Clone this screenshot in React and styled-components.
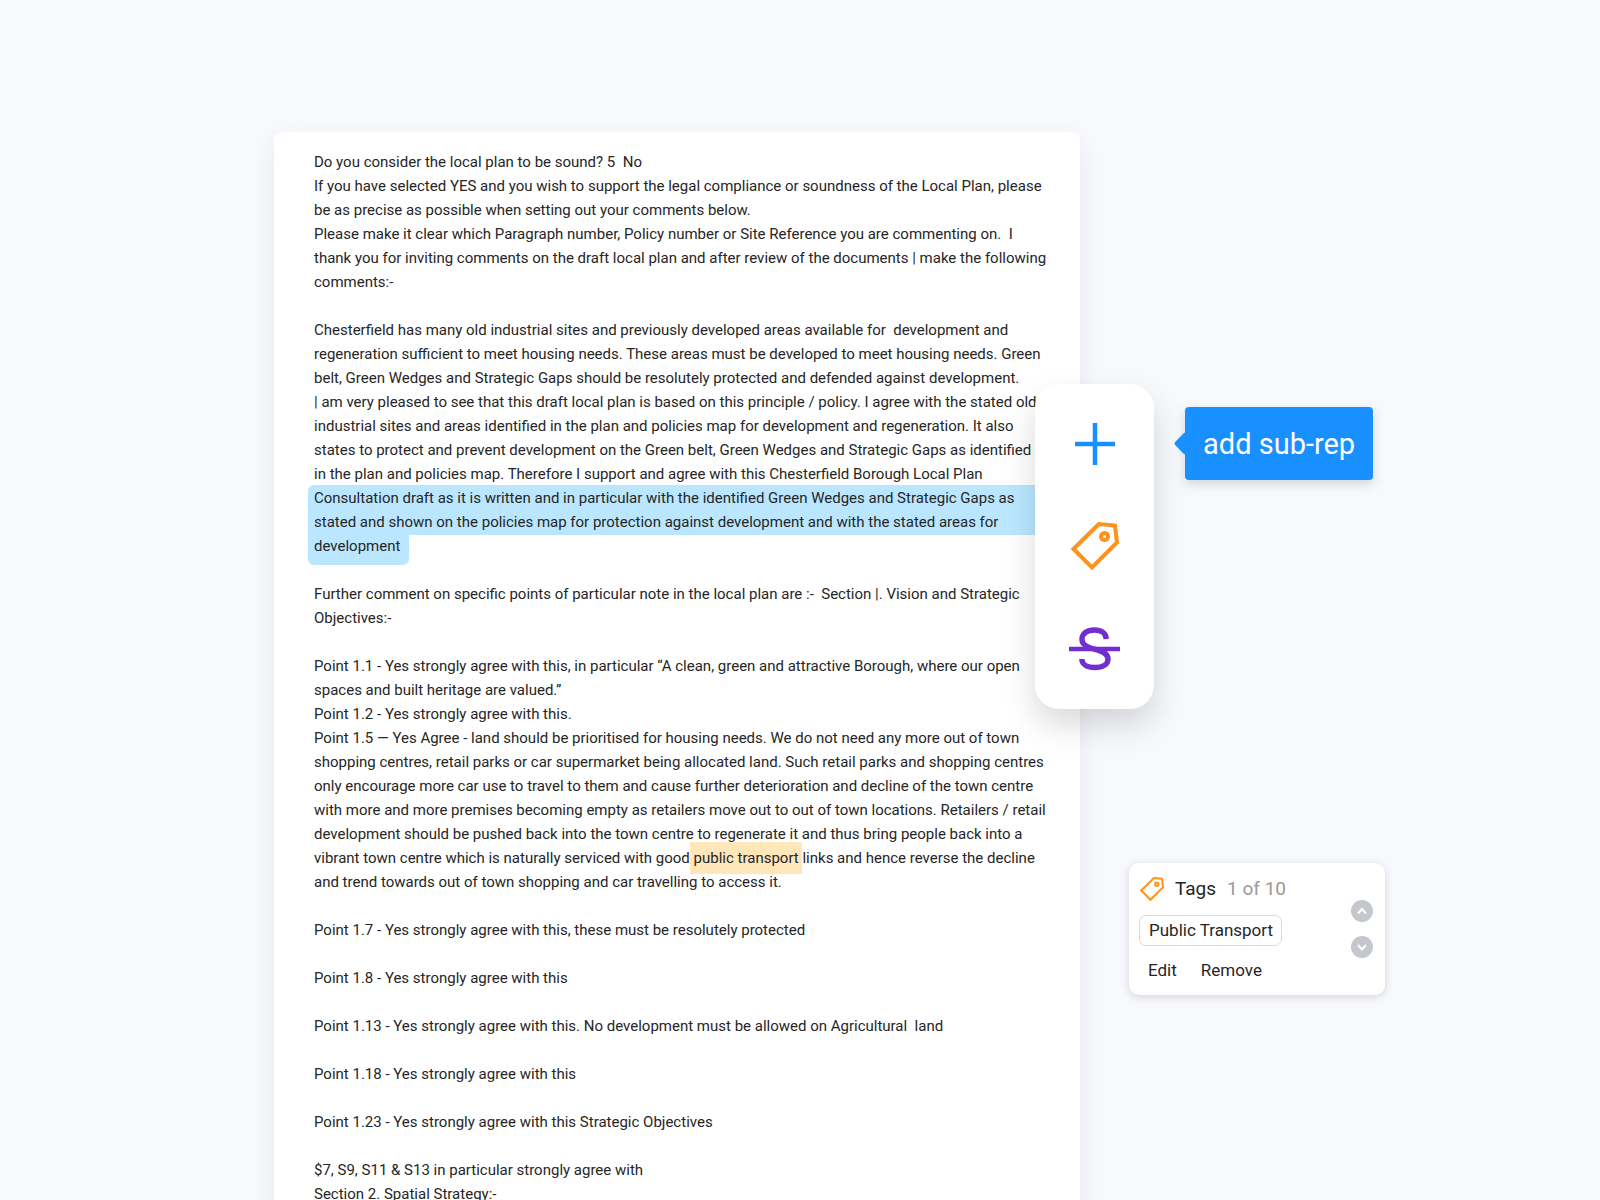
import React from "react";
import styled, { createGlobalStyle } from "styled-components";

const GlobalStyle = createGlobalStyle`
  * {
    box-sizing: border-box;
  }

  body {
    margin: 0;
    background-color: #f8f9fd;
    color: #262626;
    font-family: Roboto, Inter, "Liberation Sans", sans-serif;
  }

  button {
    font: inherit;
    color: inherit;
    padding: 0;
    border: none;
    background: none;
    cursor: pointer;
  }
`;

const Container = styled.div`
  display: grid;
  grid-template-columns: 274fr minmax(0, 806fr) 520fr;
  height: 100vh;
  padding-top: 132px;
  overflow: hidden;
`;

const Sheet = styled.main`
  grid-column: 2;
  padding: 18px 40px;
  background-color: white;
  border-radius: 8px 8px 0 0;
  box-shadow: 0 8px 24px rgba(0, 0, 0, 0.07);
  font-size: 15px;
  line-height: 24px;
  white-space: pre;
`;

const Paragraph = styled.p`
  margin: 0 0 24px;
`;

const Selection = styled.mark`
  display: block;
  color: inherit;
  background: none;
`;

const SelectionBody = styled.span`
  display: block;
  margin: -1px -6px;
  padding: 1px 6px;
  background-color: #bae7ff;
  border-radius: 6px 0 0 0;
`;

const SelectionEnd = styled.span`
  display: block;
  width: fit-content;
  margin: 0 -6px -7px;
  padding: 0 9px 7px 6px;
  background-color: #bae7ff;
  border-radius: 0 0 6px 6px;
`;

const TagMark = styled.mark`
  padding: 7px 0;
  color: inherit;
  background-color: #ffe7ba;
`;

const Side = styled.aside`
  grid-column: 3;
  display: flex;
  flex-direction: column;
  align-items: flex-start;
  gap: 154px;
  padding-top: 252px;
`;

const Actions = styled.div`
  display: flex;
  align-items: flex-start;
  gap: 31px;
  margin-left: -45px;
  z-index: 1;
`;

const Toolbar = styled.div`
  display: flex;
  flex-direction: column;
  width: 119px;
  padding: 9px 0 10px;
  background-color: white;
  border-radius: 24px;
  box-shadow: 0 16px 32px rgba(0, 0, 0, 0.15);
`;

const ToolButton = styled.button`
  display: flex;
  align-items: center;
  justify-content: center;
  height: 102px;
  color: ${(props) => props.$color};
`;

const Tooltip = styled.div`
  position: relative;
  margin-top: 23px;
  padding: 19px 18px 18px;
  border-radius: 4px;
  background-color: #1890ff;
  box-shadow: 0 4px 12px rgba(0, 0, 0, 0.15);
  color: white;
  font-size: 29px;
  line-height: 36px;
  white-space: nowrap;

  &::before {
    content: "";
    position: absolute;
    left: -8px;
    top: 28px;
    width: 17px;
    height: 17px;
    border-radius: 3px;
    background-color: #1890ff;
    transform: rotate(45deg);
  }
`;

const Card = styled.section`
  display: flex;
  align-items: center;
  justify-content: space-between;
  width: 256px;
  height: 132px;
  margin-left: 49px;
  padding: 10px 12px 10px 10px;
  background-color: white;
  border-radius: 10px;
  box-shadow: 0 2px 8px rgba(0, 0, 0, 0.15);
`;

const CardBody = styled.div`
  display: flex;
  flex-direction: column;
  align-items: flex-start;
`;

const CardTop = styled.div`
  display: flex;
  align-items: center;
  height: 32px;
  color: #ff911d;
`;

const CardTitle = styled.h2`
  margin: 0 11px 0 10px;
  color: #262626;
  font-size: 19px;
  font-weight: 400;
`;

const Count = styled.span`
  color: #999;
  font-size: 19px;
`;

const Chip = styled.span`
  height: 31px;
  margin: 10px 0 8px;
  padding: 0 8px 0 9px;
  border: 1px solid #d9d9de;
  border-radius: 7px;
  font-size: 17px;
  line-height: 28px;
`;

const Links = styled.div`
  display: flex;
  gap: 24px;
  padding-left: 9px;
  font-size: 17px;
  line-height: 32px;
`;

const Pager = styled.div`
  display: flex;
  flex-direction: column;
  gap: 14px;
`;

const PagerButton = styled.button`
  display: flex;
  align-items: center;
  justify-content: center;
  width: 22px;
  height: 22px;

  && {
    background-color: #c4c8cc;
    border-radius: 50%;
    color: white;
  }
`;

const PlusIcon = () => (
  <svg width="52" height="52" viewBox="0 0 52 52" aria-hidden="true">
    <path d="M6 26H46M26 5V47" stroke="currentColor" strokeWidth="4.5" />
  </svg>
);

const TagIcon = ({ size, stroke }) => (
  <svg
    width={size}
    height={size}
    viewBox="0 0 52 52"
    fill="none"
    stroke="currentColor"
    strokeWidth={stroke}
    aria-hidden="true"
  >
    <path d="M4.5 29L29.8 4L46 5.5L48 22.5L23 47.5Z" />
    <circle cx="35.5" cy="16.5" r="3.5" />
  </svg>
);

const StrikeIcon = () => (
  <svg
    width="52"
    height="52"
    viewBox="0 0 52 52"
    fill="none"
    stroke="currentColor"
    aria-hidden="true"
  >
    <path
      strokeWidth="5.4"
      d="M37.3 17C37 11 32 8 25.5 8C18 8 13 11.5 13 17.5C13 22.5 17 25 25 27C34 29 39 31.5 39 37C39 42.5 33.5 45.5 26 45.5C18 45.5 13 42.5 12.8 37"
    />
    <path strokeWidth="4.5" d="M0 27H51" />
  </svg>
);

const ChevronIcon = ({ d }) => (
  <svg
    width="22"
    height="22"
    viewBox="0 0 22 22"
    fill="none"
    stroke="currentColor"
    strokeWidth="2"
    aria-hidden="true"
  >
    <path d={d} />
  </svg>
);

const intro = `Do you consider the local plan to be sound? 5  No
If you have selected YES and you wish to support the legal compliance or soundness of the Local Plan, please
be as precise as possible when setting out your comments below.
Please make it clear which Paragraph number, Policy number or Site Reference you are commenting on.  I
thank you for inviting comments on the draft local plan and after review of the documents | make the following
comments:-`;

const support = `Chesterfield has many old industrial sites and previously developed areas available for  development and
regeneration sufficient to meet housing needs. These areas must be developed to meet housing needs. Green
belt, Green Wedges and Strategic Gaps should be resolutely protected and defended against development.
| am very pleased to see that this draft local plan is based on this principle / policy. I agree with the stated old
industrial sites and areas identified in the plan and policies map for development and regeneration. It also
states to protect and prevent development on the Green belt, Green Wedges and Strategic Gaps as identified
in the plan and policies map. Therefore I support and agree with this Chesterfield Borough Local Plan`;

const selected = `Consultation draft as it is written and in particular with the identified Green Wedges and Strategic Gaps as
stated and shown on the policies map for protection against development and with the stated areas for`;

const further = `Further comment on specific points of particular note in the local plan are :-  Section |. Vision and Strategic
Objectives:-`;

const housing = `Point 1.1 - Yes strongly agree with this, in particular “A clean, green and attractive Borough, where our open
spaces and built heritage are valued.”
Point 1.2 - Yes strongly agree with this.
Point 1.5 — Yes Agree - land should be prioritised for housing needs. We do not need any more out of town
shopping centres, retail parks or car supermarket being allocated land. Such retail parks and shopping centres
only encourage more car use to travel to them and cause further deterioration and decline of the town centre
with more and more premises becoming empty as retailers move out to out of town locations. Retailers / retail
development should be pushed back into the town centre to regenerate it and thus bring people back into a
vibrant town centre which is naturally serviced with good`;

const points = [
  "Point 1.7 - Yes strongly agree with this, these must be resolutely protected",
  "Point 1.8 - Yes strongly agree with this",
  "Point 1.13 - Yes strongly agree with this. No development must be allowed on Agricultural  land",
  "Point 1.18 - Yes strongly agree with this",
  "Point 1.23 - Yes strongly agree with this Strategic Objectives",
  "$7, S9, S11 & S13 in particular strongly agree with\nSection 2. Spatial Strategy:-",
];

const App = () => {
  return (
    <>
      <GlobalStyle />
      <Container>
        <Sheet>
          <Paragraph>{intro}</Paragraph>
          <Paragraph as="div">
            {support}
            <Selection>
              <SelectionBody>{selected}</SelectionBody>
              <SelectionEnd>development</SelectionEnd>
            </Selection>
          </Paragraph>
          <Paragraph>{further}</Paragraph>
          <Paragraph>
            {housing}
            <TagMark> public transport </TagMark>
            {"links and hence reverse the decline\n"}
            and trend towards out of town shopping and car travelling to access
            it.
          </Paragraph>
          {points.map((point) => (
            <Paragraph key={point}>{point}</Paragraph>
          ))}
        </Sheet>
        <Side>
          <Actions>
            <Toolbar role="toolbar" aria-label="Annotate">
              <ToolButton $color="#1890ff" aria-label="Add sub-rep">
                <PlusIcon />
              </ToolButton>
              <ToolButton $color="#ff911d" aria-label="Tag">
                <TagIcon size={52} stroke={4} />
              </ToolButton>
              <ToolButton $color="#722ed1" aria-label="Strike through">
                <StrikeIcon />
              </ToolButton>
            </Toolbar>
            <Tooltip role="tooltip">add sub-rep</Tooltip>
          </Actions>
          <Card>
            <CardBody>
              <CardTop>
                <TagIcon size={26} stroke={4} />
                <CardTitle>Tags</CardTitle>
                <Count>1 of 10</Count>
              </CardTop>
              <Chip>Public Transport</Chip>
              <Links>
                <button>Edit</button>
                <button>Remove</button>
              </Links>
            </CardBody>
            <Pager>
              <PagerButton aria-label="Previous tag">
                <ChevronIcon d="M7 13.5L11 9L15 13.5" />
              </PagerButton>
              <PagerButton aria-label="Next tag">
                <ChevronIcon d="M7 9L11 13.5L15 9" />
              </PagerButton>
            </Pager>
          </Card>
        </Side>
      </Container>
    </>
  );
};

export default App;
